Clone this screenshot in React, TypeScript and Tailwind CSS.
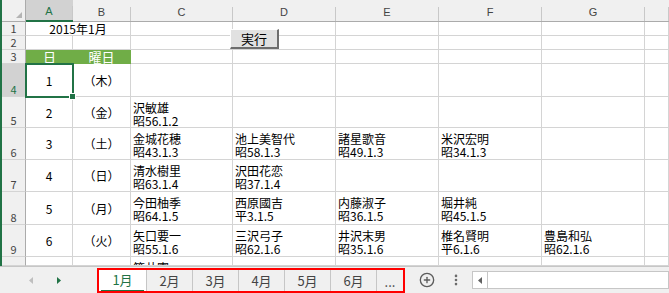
import { CirclePlus, EllipsisVertical } from "lucide-react";

type Person = [string, string];

const columns = ["A", "B", "C", "D", "E", "F", "G", ""];

const days: { n: string; day: string; people: Person[] }[] = [
  { n: "1", day: "（木）", people: [] },
  { n: "2", day: "（金）", people: [["沢敏雄", "昭56.1.2"]] },
  {
    n: "3",
    day: "（土）",
    people: [
      ["金城花穂", "昭43.1.3"],
      ["池上美智代", "昭58.1.3"],
      ["諸星歌音", "昭49.1.3"],
      ["米沢宏明", "昭34.1.3"],
    ],
  },
  {
    n: "4",
    day: "（日）",
    people: [
      ["清水樹里", "昭63.1.4"],
      ["沢田花恋", "昭37.1.4"],
    ],
  },
  {
    n: "5",
    day: "（月）",
    people: [
      ["今田柚季", "昭64.1.5"],
      ["西原國吉", "平3.1.5"],
      ["内藤淑子", "昭36.1.5"],
      ["堀井純", "昭45.1.5"],
    ],
  },
  {
    n: "6",
    day: "（火）",
    people: [
      ["矢口要一", "昭55.1.6"],
      ["三沢弓子", "昭62.1.6"],
      ["井沢末男", "昭35.1.6"],
      ["椎名賢明", "平6.1.6"],
      ["豊島和弘", "昭62.1.6"],
    ],
  },
];

const tabs = ["2月", "3月", "4月", "5月", "6月"];

function RowHead({ n, selected }: { n: string; selected?: boolean }) {
  return (
    <div
      className={`flex items-end justify-center border-r border-b border-r-[#ababab] border-b-[#d4d4d4] pb-[1px] text-[11px] leading-[12px] ${
        selected ? "bg-[#d2d2d2] text-[#217346]" : "bg-[#f0f0f0] text-[#444]"
      }`}
    >
      {n}
    </div>
  );
}

function Cell({ children, className = "" }: { children?: React.ReactNode; className?: string }) {
  return <div className={`border-r border-b border-[#d4d4d4] ${className}`}>{children}</div>;
}

function Blanks({ count }: { count: number }) {
  return (
    <>
      {Array.from({ length: count }).map((_, i) => (
        <Cell key={i} />
      ))}
    </>
  );
}

function Triangle({ dir, color }: { dir: "left" | "right"; color: string }) {
  return (
    <svg width="4" height="7" viewBox="0 0 4 7">
      <polygon points={dir === "left" ? "4,0 0,3.5 4,7" : "0,0 4,3.5 0,7"} fill={color} />
    </svg>
  );
}

export default function App() {
  return (
    <div className="w-[669px] h-[293px] overflow-hidden bg-white flex flex-col font-['Noto_Sans_CJK_JP',sans-serif] text-black">
      {/* sheet */}
      <div className="relative h-[266px] overflow-hidden border-l-2 border-[#217346]">
        <div className="grid grid-cols-[24px_47px_58px_102px_103px_103px_103px_103px_1fr] grid-rows-[22px_14px_14px_14px_33px_31px_32px_32px_33px_32px_9px] text-[12px] leading-[13px]">
          {/* column headers */}
          <div className="flex items-end justify-end bg-[#f0f0f0] border-b border-r border-[#ababab] pr-[3px] pb-[3px]">
            <svg width="6" height="6" viewBox="0 0 6 6">
              <polygon points="6,0 6,6 0,6" fill="#b4b4b4" />
            </svg>
          </div>
          {columns.map((c, i) => (
            <div
              key={i}
              className={`flex font-['Liberation_Sans',sans-serif] text-[11px] ${
                c === "A"
                  ? "bg-[#d2d2d2] border-b-2 border-[#217346] text-[#217346]"
                  : "bg-[#f0f0f0] border-b border-[#ababab] text-[#444]"
              }`}
            >
              <div className="flex-1 flex items-center justify-center pt-[3px]">{c}</div>
              <div className="w-px h-[14px] self-end bg-[#c8c8c8]" />
            </div>
          ))}

          {/* row 1 */}
          <RowHead n="1" />
          <Cell className="col-span-2 flex items-center justify-center">2015年1月</Cell>
          <Blanks count={6} />

          {/* row 2 */}
          <RowHead n="2" />
          <Blanks count={8} />

          {/* row 3 */}
          <RowHead n="3" />
          <div className="flex items-center justify-center bg-[#70ad47] border-b border-[#70ad47] text-white text-[13px]">日</div>
          <div className="flex items-center justify-center bg-[#70ad47] border-b border-r border-[#70ad47] text-white text-[13px]">曜日</div>
          <Blanks count={6} />

          {days.map((d, i) => (
            <div key={d.n} className="contents">
              <RowHead n={String(i + 4)} selected={i === 0} />
              <Cell
                className={`flex items-center justify-center ${
                  i === 0 ? "relative z-10 outline-2 outline-[#217346] -outline-offset-1" : ""
                }`}
              >
                {d.n}
                {i === 0 && (
                  <div className="absolute right-[-4px] bottom-[-4px] w-[7px] h-[7px] bg-[#217346] border border-white" />
                )}
              </Cell>
              <Cell className="flex items-center justify-center">{d.day}</Cell>
              {[0, 1, 2, 3, 4].map((k) => (
                <Cell key={k} className="pl-[2px] pt-[4px] whitespace-nowrap">
                  {d.people[k] && (
                    <>
                      <div>{d.people[k][0]}</div>
                      <div>{d.people[k][1]}</div>
                    </>
                  )}
                </Cell>
              ))}
              <Cell />
            </div>
          ))}

          {/* row 10, cut off by the tab bar */}
          <RowHead n="" />
          <Blanks count={2} />
          <Cell className="pl-[2px] pt-[4px] overflow-hidden">笠井憲</Cell>
          <Blanks count={5} />
        </div>

        {/* macro button */}
        <button className="absolute left-[228px] top-[29px] w-[49px] h-[20px] bg-[#e1e1e1] border-t border-l border-t-white border-l-white border-r-2 border-b-2 border-r-[#6d6d6d] border-b-[#6d6d6d] text-[13px] leading-[16px] text-black">
          実行
        </button>
      </div>

      {/* sheet tabs */}
      <div className="flex h-[27px] bg-[#f0f0f0] border-t border-[#c6c6c6]">
        <div className="w-[97px] flex items-center">
          <div className="ml-[29px]">
            <Triangle dir="left" color="#bfbfbf" />
          </div>
          <div className="ml-[24px]">
            <Triangle dir="right" color="#217346" />
          </div>
        </div>

        <div className="w-[308px] h-[25px] mt-px border-2 border-[#ff0000] flex text-[13px]">
          <div className="w-[48px] bg-white border-r border-[#c6c6c6] flex flex-col">
            <div className="flex-1 flex items-center justify-center text-[#217346]">1月</div>
            <div className="h-[2px] mx-[2px] mb-[1px] bg-[#217346]" />
          </div>
          {tabs.map((t) => (
            <div key={t} className="w-[46px] border-r border-[#c6c6c6] flex items-center justify-center text-[#444]">
              {t}
            </div>
          ))}
          <div className="flex-1 flex items-center justify-center text-[#444] pt-[2px]">...</div>
        </div>

        <div className="flex items-center ml-[14px]">
          <CirclePlus size={16} strokeWidth={2} color="#5c5c5c" />
        </div>
        <div className="flex items-center ml-[14px]">
          <EllipsisVertical size={14} strokeWidth={2.5} color="#6a6a6a" />
        </div>
        <div className="flex items-center flex-1 ml-[9px]">
          <div className="flex-1 h-[18px] bg-white border border-[#c6c6c6] flex">
            <div className="w-[15px] border-r border-[#c6c6c6] flex items-center justify-center">
              <Triangle dir="left" color="#606060" />
            </div>
          </div>
        </div>
      </div>
    </div>
  );
}
